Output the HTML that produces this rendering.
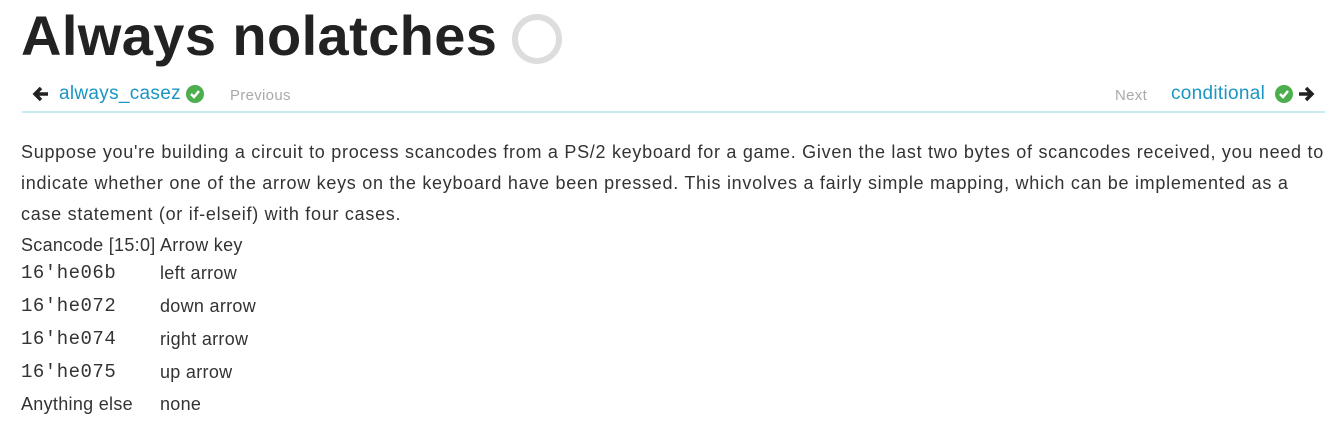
<!DOCTYPE html>
<html><head><meta charset="utf-8"><style>
body{margin:0;width:1339px;height:433px;background:#fff;font-family:"Liberation Sans",sans-serif;color:#333;position:relative;overflow:hidden}
.a{position:absolute;white-space:nowrap}
h1{position:absolute;left:21px;top:3px;margin:0;font-size:56px;font-weight:bold;color:#222;letter-spacing:0.4px}
.link{color:#1a96c4;font-size:19px;letter-spacing:0.3px}
.grey{color:#aaa;font-size:15px;letter-spacing:0.3px}
p{position:absolute;left:21px;top:137px;width:1312px;margin:0;font-size:18px;line-height:31px;color:#333;letter-spacing:0.72px}
.r{position:absolute;left:21px;font-size:18px;white-space:nowrap;letter-spacing:0.3px}
.r span{position:absolute;left:139px;white-space:nowrap}
.m{font-family:"Liberation Mono",monospace;font-size:19px;font-weight:normal;letter-spacing:0.5px}
</style></head><body>
<h1>Always nolatches</h1>
<svg class="a" style="left:511px;top:13px" width="54" height="54"><circle cx="26" cy="26" r="22" fill="none" stroke="#ddd" stroke-width="6"/></svg>
<svg class="a" style="left:32px;top:86px" width="18" height="16"><path d="M9 2 L3 8 L9 14 M3 8 H16" stroke="#222" stroke-width="3.5" fill="none"/></svg>
<div class="a link" style="left:59px;top:83px">always_casez</div>
<svg class="a" style="left:186px;top:85px" width="18" height="18"><circle cx="9" cy="9" r="9" fill="#4cae4c"/><path d="M5 9 L8 12 L13 6" stroke="#fff" stroke-width="2.5" fill="none"/></svg>
<div class="a grey" style="left:230px;top:87px">Previous</div>
<div class="a grey" style="left:1115px;top:87px">Next</div>
<div class="a link" style="left:1171px;top:83px">conditional</div>
<svg class="a" style="left:1275px;top:85px" width="18" height="18"><circle cx="9" cy="9" r="9" fill="#4cae4c"/><path d="M5 9 L8 12 L13 6" stroke="#fff" stroke-width="2.5" fill="none"/></svg>
<svg class="a" style="left:1297px;top:86px" width="18" height="16"><path d="M9 2 L15 8 L9 14 M15 8 H2" stroke="#222" stroke-width="3.5" fill="none"/></svg>
<div class="a" style="left:22px;top:111px;width:1303px;height:2px;background:#c8e9ef"></div>
<p>Suppose you're building a circuit to process scancodes from a PS/2 keyboard for a game. Given the last two bytes of scancodes received, you need to indicate whether one of the arrow keys on the keyboard have been pressed. This involves a fairly simple mapping, which can be implemented as a case statement (or if-elseif) with four cases.</p>
<div class="r" style="top:235px">Scancode [15:0]<span>Arrow key</span></div>
<div class="r" style="top:262px"><b class="m">16'he06b</b><span style="top:1px">left arrow</span></div>
<div class="r" style="top:295px"><b class="m">16'he072</b><span style="top:1px">down arrow</span></div>
<div class="r" style="top:328px"><b class="m">16'he074</b><span style="top:1px">right arrow</span></div>
<div class="r" style="top:361px"><b class="m">16'he075</b><span style="top:1px">up arrow</span></div>
<div class="r" style="top:394px">Anything else<span>none</span></div>
</body></html>
